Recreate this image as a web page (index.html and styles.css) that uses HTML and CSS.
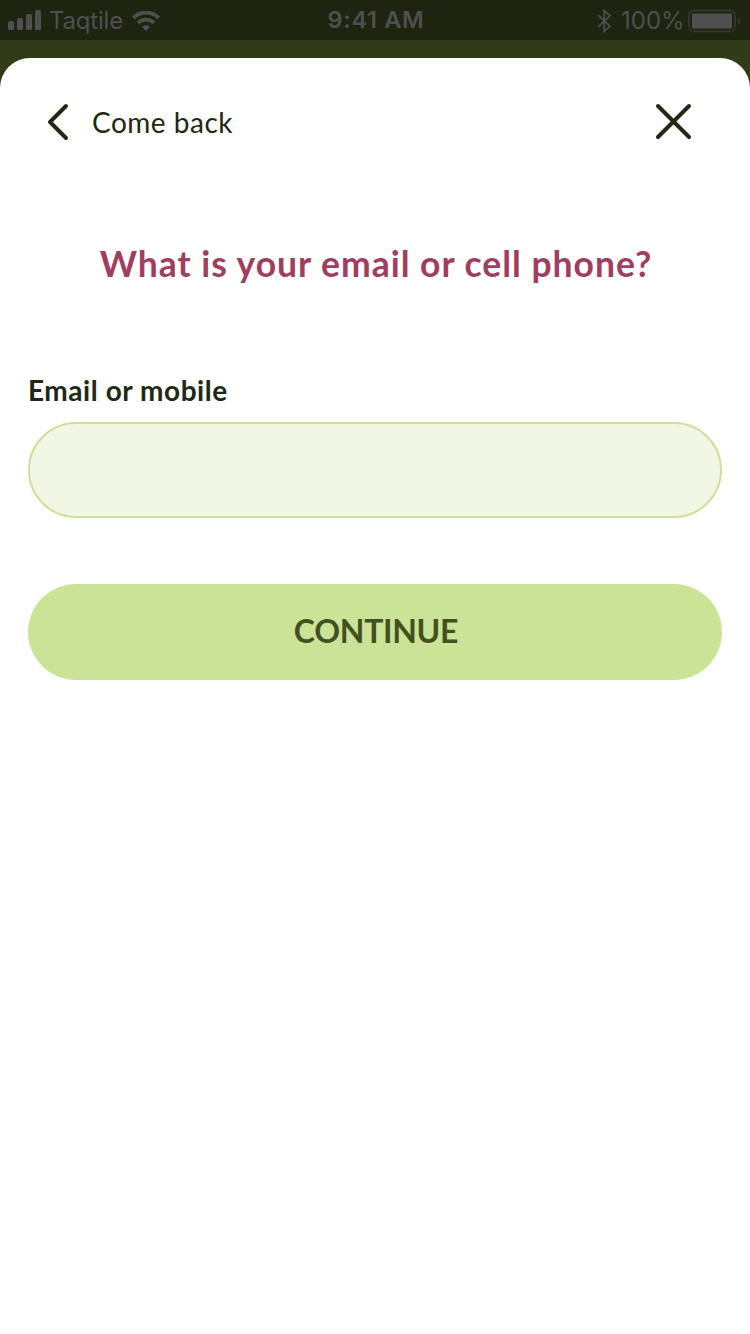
FILE: index.html
```html
<!DOCTYPE html>
<html lang="en">
<head>
<meta charset="utf-8">
<title>Sign in</title>
<link rel="stylesheet" href="styles.css">
</head>
<body>
<div class="screen">
  <header class="status">
    <div class="status-left">
      <svg class="signal" width="33" height="20" viewBox="0 0 33 20" fill="currentColor"><rect y="11" width="6" height="9" rx="1.6"/><rect x="9" y="8" width="6" height="12" rx="1.6"/><rect x="18" y="4" width="6" height="16" rx="1.6"/><rect x="27" width="6" height="20" rx="1.6"/></svg>
      <span class="carrier">Taqtile</span>
      <svg class="wifi" width="28" height="20" viewBox="0 0 28 20" fill="none" stroke="currentColor" stroke-width="3.8"><path d="M1.300 6.900a18 18 0 0 1 25.400 0"/><path d="M5.900 11.900a11.500 11.500 0 0 1 16.200 0"/><path d="M14 20l-4.100-4.200a5.900 5.900 0 0 1 8.200 0z" fill="currentColor" stroke="none"/></svg>
    </div>
    <span class="time">9:41 AM</span>
    <div class="status-right">
      <svg class="bluetooth" width="16" height="24" viewBox="0 0 16 24" fill="none" stroke="currentColor" stroke-width="1.7"><path d="M1.200 6.200L13 17.300 7.200 22.300V1.700L13 6.600 1.200 17.800"/></svg>
      <span class="percent">100%</span>
      <svg class="battery" width="54" height="24" viewBox="0 0 54 24"><rect x="1" y="1.500" width="46" height="21" rx="5" fill="none" stroke="#31352a" stroke-width="2"/><rect x="4" y="4.500" width="40" height="15" rx="1" fill="#4f4f4f"/><path d="M50 8.500c3.500 1 3.500 6.500 0 7.500z" fill="#31352a"/></svg>
    </div>
  </header>
  <main class="sheet">
    <nav class="nav">
      <a class="back"><svg width="22" height="38" viewBox="0 0 22 38" fill="none" stroke="currentColor" stroke-width="4" stroke-linecap="round" stroke-linejoin="round"><path d="M19 3L3 19l16 16"/></svg><span class="back-label">Come back</span></a>
      <svg class="close" width="37" height="37" viewBox="0 0 37 37" fill="none" stroke="currentColor" stroke-width="4" stroke-linecap="round"><path d="M3 3l31 31M34 3L3 34"/></svg>
    </nav>
    <h1 class="title"><span class="title-text">What is your email or cell phone?</span></h1>
    <label class="label" for="contact"><span>Email or mobile</span></label>
    <input class="field" id="contact" type="text">
    <button class="continue" type="button">CONTINUE</button>
  </main>
</div>
</body>
</html>
```
FILE: styles.css
```css
* { box-sizing: border-box; }
body { margin: 0; font-family: Lato, "Noto Sans", sans-serif; }
.screen { height: 1334px; background: #323b18; color: #212912; display: flex; flex-direction: column; overflow: hidden; }
.status { height: 40px; margin-bottom: 18px; padding: 0 8px 2px; background: #1e2410; color: #4f4f4f; display: grid; grid-template-columns: 1fr auto 1fr; align-items: center; font: 400 24px/38px Inter, sans-serif; }
.status svg { display: block; flex: none; }
.status-left, .status-right { display: flex; align-items: center; }
.status-right { justify-content: flex-end; }
.carrier { margin: 2px 10px 0 8px; width: 73px; white-space: nowrap; letter-spacing: -.2px; }
.wifi { margin-top: 1px; }
.time { padding-left: 2px; font-weight: 600; font-size: 23.5px; letter-spacing: .7px; }
.bluetooth { margin: 1px 8px 0 0; }
.percent { margin-top: 2px; width: 62px; white-space: nowrap; }
.battery { margin: 2px 0 0 5px; }
.sheet { flex: 1; background: #fff; border-radius: 30px 30px 0 0; padding: 44px 28px 0; display: flex; flex-direction: column; }
.nav { display: flex; justify-content: space-between; align-items: center; height: 40px; padding: 0 30px 0 19px; }
.back { display: flex; align-items: center; gap: 23px; font-size: 28px; letter-spacing: .5px; }
.close { margin-bottom: 1px; }
.title { margin: 98px 0 0; height: 48px; padding-left: 2px; font-size: 35.5px; line-height: 48px; font-weight: 700; letter-spacing: .97px; text-align: center; color: #9f3e60; white-space: nowrap; }
.label { margin-top: 84px; height: 36px; line-height: 36px; font-size: 28px; font-weight: 700; letter-spacing: .55px; white-space: nowrap; }
.field { margin: 14px 0 0; width: 100%; height: 96px; padding: 0 32px; border: 2px solid #c9e296; border-radius: 48px; background: #f2f6e5; font: 400 28px Lato, sans-serif; outline: 0; }
.continue { margin-top: 66px; height: 96px; padding: 0 0 4px 2px; border: 0; border-radius: 48px; background: #cae396; color: #43501f; font: 700 32px Lato, sans-serif; letter-spacing: -.3px; }
```
